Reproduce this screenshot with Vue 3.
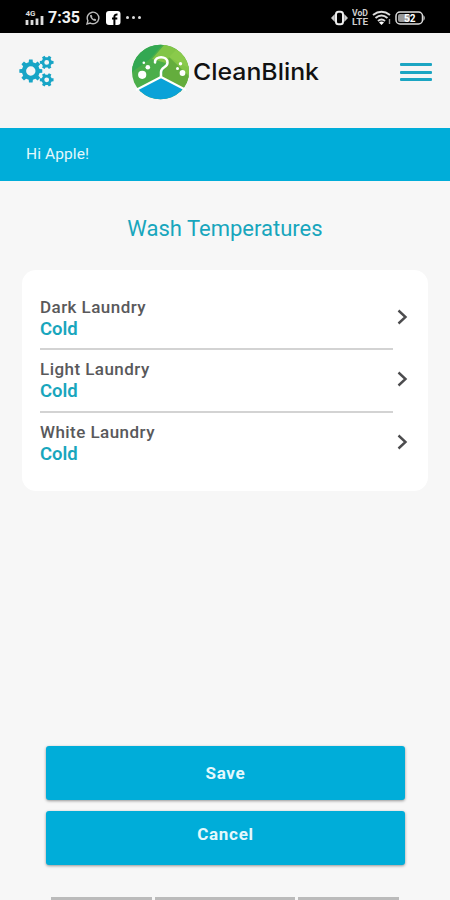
<template>
  <div class="screen">
    <header class="status-bar">
      <div class="status-left">
        <svg class="signal" width="20" height="18" viewBox="0 0 20 18">
          <text x="0.5" y="6.8" class="network">4G</text>
          <path d="M2 11v5M7 11v5M12 9.500v6.500M17 7v9" stroke="#ddd" stroke-width="2.800" />
        </svg>
        <span class="clock">7:35</span>
        <svg class="whatsapp" width="14" height="14" viewBox="0 0 14 14" fill="none" stroke="#bbb">
          <path d="M1 13l.9-3.300A5.800 5.800 0 1 1 4.300 12.100Z" stroke-width="1.400" />
          <path d="M4.800 4.200c-.4 2.500 2.500 5.400 5 5M4.800 4.200l1 1.600M9.800 9.200l-1.700-1" stroke-width="1.500" />
        </svg>
        <svg class="facebook" width="15" height="14" viewBox="0 0 15 14">
          <rect width="14.500" height="14" rx="3" fill="#fff" />
          <path d="M8.400 14V5.800Q8.400 3.300 11.500 3.500M6 7.500h5.300" fill="none" stroke="#000" stroke-width="2" />
        </svg>
        <span class="dots"><i></i><i></i><i></i></span>
      </div>
      <div class="status-right">
        <svg width="17" height="16" viewBox="0 0 17 16">
          <path d="M3.800 4v8L0 8ZM13.200 4v8L17 8Z" fill="#ccc" />
          <rect x="5" y="1.700" width="7" height="12.600" rx="2.500" fill="#000" stroke="#eee" stroke-width="2" />
        </svg>
        <svg class="volte" width="17" height="17" viewBox="0 0 17 17">
          <text x="0" y="7" textLength="16" lengthAdjust="spacingAndGlyphs">VoD</text>
          <text x="0" y="16" textLength="16" lengthAdjust="spacingAndGlyphs">LTE</text>
        </svg>
        <svg class="wifi" width="20" height="16" viewBox="0 0 20 16" fill="none" stroke="#ddd">
          <path d="M1 5Q9.500-1.500 18 5M3.500 8Q9.500 3 15.500 8M6 11Q9.500 8 13 11" stroke-width="2" />
          <path d="M7 12.500L9.500 15L12 12.500Q9.500 10.500 7 12.500Z" fill="#fff" stroke="none" />
          <path d="M17.500 9v5" stroke="#999" stroke-width="1.400" />
        </svg>
        <svg class="battery" width="31" height="14" viewBox="0 0 31 14">
          <rect x="1" y="1" width="26.500" height="12" rx="4" fill="none" stroke="#ddd" stroke-width="1.500" />
          <rect x="3" y="3" width="12" height="8" rx="2" fill="#999" />
          <path d="M28.500 4Q31 7 28.500 10Z" fill="#ddd" />
          <text x="9" y="10.800" class="battery-level">52</text>
        </svg>
      </div>
    </header>

    <nav class="navbar">
      <svg class="gears" width="36" height="34" viewBox="0 0 36 34">
        <path v-for="(gear, i) in gears" :key="i" :d="gear" fill="#17a5c6" fill-rule="evenodd" />
      </svg>
      <div class="brand">
        <svg width="58" height="56" viewBox="0 0 58 56">
          <defs>
            <clipPath id="badge"><ellipse cx="28.500" cy="28" rx="28.500" ry="27.300" /></clipPath>
          </defs>
          <g clip-path="url(#badge)">
            <path d="M0 0H58V56H0Z" fill="#4bae4a" />
            <path d="M0 0H31L18 15L0 28Z" fill="#33a852" />
            <path d="M33 0L20 15L37 20L58 40V0Z" fill="#82c546" />
            <path d="M37 13L58 33V56L29 35Z" fill="#64ad3d" />
            <path d="M37 13L60 26V9L46 4Z" fill="#8aca4b" />
            <path d="M0 48.500L29 34L58 48.500V56H0Z" fill="#0aa2d8" />
          </g>
          <path d="M4 46L29 33L54 46" fill="none" stroke="#fff" stroke-width="2" />
          <path d="M23 18.500C22.500 11.500 35.500 11.500 35.500 18.500C35.500 24 29 22.500 29 28V33" fill="none" stroke="#fff" stroke-width="2.500" stroke-linecap="round" />
          <g fill="#fff">
            <circle cx="10.200" cy="30.800" r="4.100" />
            <circle cx="15.800" cy="23.200" r="2.300" />
            <circle cx="11.800" cy="18.800" r="1.300" />
            <circle cx="50.500" cy="29" r="2.900" />
            <circle cx="45.500" cy="24.500" r="1.500" />
            <circle cx="48.500" cy="19.800" r="1.700" />
          </g>
        </svg>
        <svg class="wordmark" width="128" height="30" viewBox="0 0 128 30">
          <text x="0" y="23" textLength="126" lengthAdjust="spacingAndGlyphs">CleanBlink</text>
        </svg>
      </div>
      <div class="menu"><span></span><span></span><span></span></div>
    </nav>

    <div class="greeting">Hi Apple!</div>

    <main class="content">
      <h1 class="title">Wash Temperatures</h1>

      <div class="card">
        <div v-for="item in items" :key="item.name" class="row">
          <div class="row-text">
            <div class="row-name">{{ item.name }}</div>
            <div class="row-value">{{ item.value }}</div>
          </div>
          <svg class="chevron" width="12" height="16" viewBox="0 0 12 16">
            <path d="M1.500 1.500L8.500 8L1.500 14.500" fill="none" stroke="#4c4c4e" stroke-width="2.400" />
          </svg>
        </div>
      </div>
    </main>

    <footer class="actions">
      <button class="btn">Save</button>
      <button class="btn btn-cancel">Cancel</button>
      <div class="tabs"><span></span><span></span><span></span></div>
    </footer>
  </div>
</template>

<script setup>
const items = [
  { name: 'Dark Laundry', value: 'Cold' },
  { name: 'Light Laundry', value: 'Cold' },
  { name: 'White Laundry', value: 'Cold' }
]

// Toothed wheel outline with a round hole in the middle
function gearPath(cx, cy, outer, inner, hole, teeth, offset = 0) {
  const step = (Math.PI * 2) / teeth
  const points = []
  for (let i = 0; i < teeth; i++) {
    const a = i * step + offset
    const corners = [[-0.3, inner], [-0.2, outer], [0.2, outer], [0.3, inner]]
    corners.forEach(([t, r]) => {
      const x = cx + Math.cos(a + t * step) * r
      const y = cy + Math.sin(a + t * step) * r
      points.push(`${x.toFixed(2)} ${y.toFixed(2)}`)
    })
  }
  return `M${points.join('L')}ZM${cx - hole} ${cy}a${hole} ${hole} 0 1 0 ${hole * 2} 0a${hole} ${hole} 0 1 0 ${-hole * 2} 0Z`
}

const gears = [
  gearPath(11.8, 17, 11.6, 9, 4.7, 8),
  gearPath(27.7, 8.4, 7, 5.2, 2.4, 6),
  gearPath(27.7, 25.8, 7, 5.2, 2.4, 6)
]
</script>

<style>
body {
  background: #f7f7f7;
}
</style>

<style scoped>
.screen {
  display: flex;
  flex-direction: column;
  width: 450px;
  height: 900px;
  overflow: hidden;
  background: #f7f7f7;
  font-family: Roboto, sans-serif;
}

.status-bar {
  display: flex;
  justify-content: space-between;
  box-sizing: border-box;
  height: 33px;
  padding: 2px 24px 0 25px;
  background: #000;
}

.status-left,
.status-right {
  display: flex;
  align-items: center;
}

.network {
  font-size: 8px;
  font-weight: 700;
  fill: #ddd;
}

.clock {
  margin-left: 3px;
  width: 38px;
  color: #f2f2f2;
  font-size: 16px;
  font-weight: 700;
}

.facebook {
  margin-left: 6px;
}

.dots {
  display: flex;
  gap: 3px;
  margin-left: 5px;
}

.dots i {
  width: 3px;
  height: 3px;
  border-radius: 50%;
  background: #ddd;
}

.volte {
  margin-left: 4px;
  font-size: 9px;
  font-weight: 700;
  fill: #ccc;
}

.wifi {
  margin-left: 3px;
}

.battery {
  margin-left: 3px;
}

.battery-level {
  font-size: 10px;
  font-weight: 700;
  fill: #fff;
}

.navbar {
  display: flex;
  align-items: flex-start;
  box-sizing: border-box;
  height: 95px;
  padding: 11px 18px 0 19px;
  background: #f5f5f5;
}

.gears {
  margin-top: 10px;
}

.brand {
  display: flex;
  align-items: center;
  margin-left: 77px;
}

.wordmark {
  margin-left: 3px;
  font-family: Inter, sans-serif;
  font-size: 23.5px;
  font-weight: 500;
  fill: #111;
}

.menu {
  display: flex;
  flex-direction: column;
  gap: 4.5px;
  width: 32px;
  margin: 19px 0 0 auto;
}

.menu span {
  height: 3px;
  border-radius: 1px;
  background: #1ba5c2;
}

.greeting {
  box-sizing: border-box;
  height: 53px;
  padding: 0 26px;
  background: #00add9;
  color: #e4f8fc;
  font-size: 15.5px;
  line-height: 53px;
  letter-spacing: 0.1px;
}

.content {
  flex: 1;
  padding: 0 22px;
}

.title {
  margin: 35px 0 0;
  color: #18a6bd;
  font-size: 22px;
  font-weight: 400;
  line-height: 26px;
  text-align: center;
}

.card {
  box-sizing: border-box;
  height: 221px;
  margin-top: 28px;
  padding: 18px 18px 0;
  border-radius: 14px;
  background: #fff;
}

.row {
  display: flex;
  height: 62.4px;
}

.row-text {
  box-sizing: border-box;
  width: 353px;
  padding-top: 8px;
  border-bottom: 2px solid #d3d3d3;
}

.row:last-child .row-text {
  border-bottom: 0;
}

.row-name {
  color: #59595b;
  font-size: 17px;
  font-weight: 500;
  line-height: 22px;
  letter-spacing: 0.45px;
}

.row-value {
  color: #18a6bd;
  font-size: 18.5px;
  font-weight: 600;
  line-height: 23px;
}

.chevron {
  margin: 21px 0 0 3.5px;
}

.actions {
  display: flex;
  flex-direction: column;
  gap: 11px;
  padding: 0 45px 0 46px;
}

.btn {
  height: 54px;
  padding: 0;
  border: 0;
  border-radius: 3px;
  background: #00add9;
  box-shadow: 0 1px 3px rgba(0, 0, 0, 0.4);
  color: #e4f8fc;
  font-family: inherit;
  font-size: 17px;
  font-weight: 700;
  letter-spacing: 0.7px;
}

.btn-cancel {
  padding-bottom: 8px;
}

.tabs {
  display: flex;
  gap: 3px;
  margin: 21px 5px 0;
}

.tabs span {
  flex: 0 0 101px;
  height: 3px;
  background: #bbb;
}

.tabs span:nth-child(2) {
  flex-basis: 140px;
}
</style>
